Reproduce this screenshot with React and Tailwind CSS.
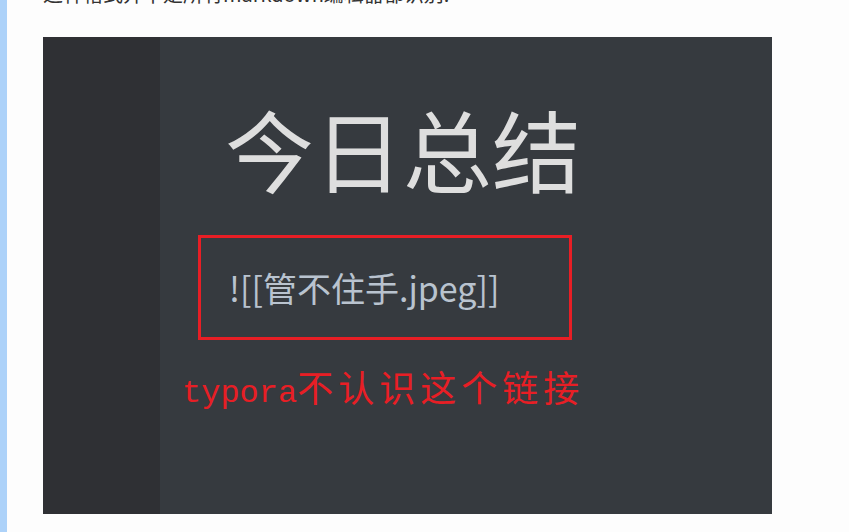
const cjk = '"Noto Sans CJK SC", "Liberation Sans", sans-serif';

const App = () => {
  return (
    <div className="w-[849px] h-[532px] overflow-hidden bg-[#fdfdfd] flex">
      {/* left edge of the window */}
      <div className="w-[7px] h-full bg-[#add2f9]" />

      <div className="flex flex-col pl-[36px]">
        <div className="h-[37px]">
          <p
            className="text-[20px] leading-[30px] text-[#333] mt-[-21px] whitespace-nowrap"
            style={{ fontFamily: cjk }}
          >
            这种格式并不是所有markdown编辑器都识别.
          </p>
        </div>

        {/* screenshot of the editor */}
        <div className="w-[729px] h-[477px] flex">
          <div className="w-[117px] h-full bg-[#2f3034]" />
          <div className="flex-1 h-full bg-[#363a3f] flex flex-col">
            <h1
              className="text-[89px] leading-none font-normal text-[#dedede] pl-[65px] pt-[66px]"
              style={{ fontFamily: cjk }}
            >
              今日总结
            </h1>

            <div className="ml-[38px] mt-[43px] w-[374px] h-[105px] border-[3px] border-[#e81e25] flex items-center pl-[28px]">
              <span
                className="text-[34px] leading-none text-[#b9c3cf]"
                style={{ fontFamily: cjk }}
              >
                ![[管不住手.jpeg]]
              </span>
            </div>

            <p
              className="ml-[22px] mt-[35px] text-[32px] leading-none text-[#e81e25] whitespace-nowrap"
              style={{ fontFamily: '"Liberation Mono", "Noto Sans CJK SC", monospace' }}
            >
              typora<span className="text-[36px] tracking-[5px]">不认识这个链接</span>
            </p>
          </div>
        </div>
      </div>
    </div>
  );
};

export default App;
